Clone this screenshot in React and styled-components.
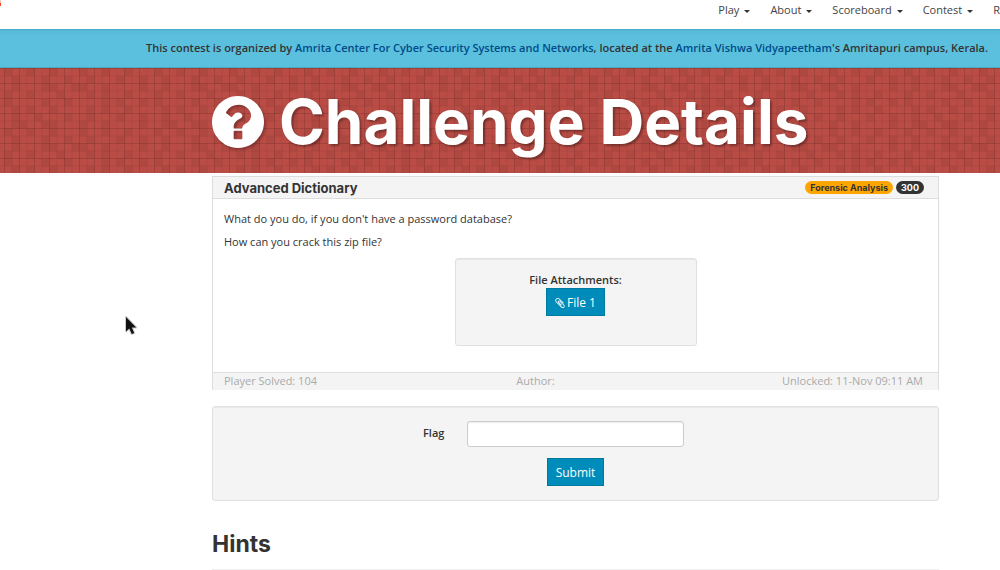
import React from "react";
import styled, { createGlobalStyle } from "styled-components";

const GlobalStyle = createGlobalStyle`
  * { box-sizing: border-box; }
  body {
    margin: 0;
    overflow-x: hidden;
    background: #fff;
    color: #333;
    font: 11px/20px "Open Sans", sans-serif;
  }
`;

const Header = styled.header`
  display: flex;
  justify-content: space-between;
  height: 29px;
  overflow: hidden;
`;

const LogoEdge = styled.svg`
  display: block;
  flex: none;
`;

const Nav = styled.nav`
  display: flex;
  gap: 20px;
`;

const NavLink = styled.a`
  display: flex;
  align-items: center;
  gap: 5px;
  height: 20px;
  color: #444;
  text-decoration: none;
  white-space: nowrap;
`;

const Caret = styled.i`
  margin-top: 3px;
  border: 3px solid transparent;
  border-top-color: #333;
  border-bottom: 0;
`;

const Banner = styled.div`
  height: 39px;
  padding: 8px 12px;
  background: linear-gradient(#57b8d6, #5bc0de 6px);
  border-top: 1px solid #46acca;
  border-bottom: 1px solid #4aa9c6;
  text-align: right;
  font-weight: 600;
  white-space: nowrap;
`;

const BannerLink = styled.a`
  color: #004b87;
  text-decoration: none;
`;

const Hero = styled.section`
  position: relative;
  height: 105px;
  overflow: hidden;
  padding: 0 61px 0 212px;
  background: #b94c45;
`;

const HeroPattern = styled.svg`
  position: absolute;
  inset: 0;
  width: 100%;
  height: 100%;
`;

const HeroTitle = styled.h1`
  position: relative;
  display: flex;
  align-items: center;
  gap: 15px;
  margin: 0;
  height: 108px;
  color: #fff;
  font: 700 62px/108px "Inter", sans-serif;
  text-shadow: 2px 2px 2px rgba(0, 0, 0, 0.3);
  white-space: nowrap;
`;

const QuestionIcon = styled.svg`
  flex: none;
  filter: drop-shadow(2px 2px 1px rgba(0, 0, 0, 0.25));
`;

const Content = styled.main`
  padding: 3px 61px 0 212px;
`;

const Challenge = styled.article`
  border: 1px solid #ddd;
  border-bottom: 0;
`;

const ChallengeHead = styled.header`
  display: flex;
  align-items: center;
  justify-content: space-between;
  height: 22px;
  padding: 0 14px 0 11px;
  background: #f4f4f4;
  border-bottom: 1px solid #ddd;
`;

const ChallengeName = styled.h2`
  margin: 0;
  font: 700 13px/20px "Inter", sans-serif;
`;

const Badges = styled.div`
  display: flex;
  gap: 3px;
`;

const Badge = styled.span`
  padding: 0 5px;
  border-radius: 7px;
  background: ${(p) => (p.$dark ? "#333" : "#ffa500")};
  color: ${(p) => (p.$dark ? "#fff" : "#333")};
  font: 700 9px/13px "Inter", sans-serif;
`;

const ChallengeBody = styled.div`
  display: flex;
  flex-direction: column;
  padding: 10px 11px 26px;
`;

const Paragraph = styled.p`
  margin: 0 0 3px;
`;

const Attachments = styled.section`
  display: flex;
  flex-direction: column;
  align-items: center;
  align-self: center;
  width: 242px;
  height: 88px;
  margin-top: 3px;
  padding-top: 13px;
  background: #f4f4f4;
  border: 1px solid #e0e0e0;
  border-radius: 3px;
  box-shadow: inset 0 1px 1px rgba(0, 0, 0, 0.05);
`;

const AttachmentsTitle = styled.strong`
  font-weight: 600;
  line-height: 16px;
`;

const Button = styled.button`
  display: inline-flex;
  align-items: center;
  justify-content: center;
  gap: 2px;
  height: 28px;
  padding: 2px 8px 0;
  border: 1px solid #0079a1;
  background: #008cba;
  color: #fff;
  font: 400 12px/20px "Open Sans", sans-serif;
`;

const ChallengeFoot = styled.footer`
  display: flex;
  justify-content: space-between;
  height: 18px;
  padding: 0 15px 0 11px;
  background: #f4f4f4;
  border-top: 1px solid #ddd;
  color: #aaa;
  line-height: 16px;
`;

const Author = styled.span`
  padding-right: 28px;
`;

const FlagForm = styled.form`
  display: flex;
  flex-direction: column;
  align-items: center;
  gap: 11px;
  margin-top: 16px;
  padding: 14px 0;
  background: #f4f4f4;
  border: 1px solid #e0e0e0;
  border-radius: 3px;
  box-shadow: inset 0 1px 1px rgba(0, 0, 0, 0.05);
`;

const Field = styled.div`
  display: flex;
  gap: 23px;
  padding-right: 44px;
`;

const FieldLabel = styled.label`
  width: 21px;
  font-weight: 600;
  line-height: 24px;
`;

const FlagInput = styled.input`
  width: 217px;
  height: 26px;
  border: 1px solid #ccc;
  border-radius: 3px;
  background: #fff;
  box-shadow: inset 0 1px 1px rgba(0, 0, 0, 0.075);
`;

const HintsTitle = styled.h2`
  margin: 23px 0 0;
  padding-bottom: 5px;
  border-bottom: 1px solid #eee;
  font: 700 23px/40px "Inter", sans-serif;
`;

const Pointer = styled.svg`
  position: absolute;
  left: 124px;
  top: 315px;
`;

const MENUS = ["Play", "About", "Scoreboard", "Contest"];

const SHADED_CELLS = [
  [0, 3, 6, 10, 13, 16],
  [1, 5, 8, 11, 15, 18],
  [1, 5, 6, 9, 10, 13, 18],
  [0, 3, 7, 11, 13, 16],
  [0, 5, 8, 13, 15, 18],
  [1, 3, 6, 11, 13, 16],
  [1, 4, 8, 11, 15, 18],
  [1, 2, 5, 6, 10, 13, 18],
];

function TiledBackground() {
  return (
    <HeroPattern aria-hidden="true">
      <defs>
        <pattern id="grid" x="4" width="15" height="15" patternUnits="userSpaceOnUse">
          <path d="M.5 0V15M0 .5H15" stroke="#000" strokeOpacity=".13" />
          <path d="M8 0V15M0 8H15" stroke="#000" strokeOpacity=".05" />
        </pattern>
        <pattern id="cells" x="4.5" y=".5" width="150" height="60" patternUnits="userSpaceOnUse">
          {SHADED_CELLS.map((row, r) =>
            row.map((c) => (
              <rect key={`${r}-${c}`} x={c * 7.5} y={r * 7.5} width="7.5" height="7.5" fill="#000" fillOpacity=".06" />
            ))
          )}
        </pattern>
      </defs>
      <rect width="100%" height="100%" fill="url(#cells)" />
      <rect width="100%" height="100%" fill="url(#grid)" />
    </HeroPattern>
  );
}

export default function App() {
  return (
    <>
      <GlobalStyle />
      <Header>
        <LogoEdge width="1" height="6" aria-hidden="true">
          <rect width="1" height="3" fill="#f9c0b5" />
          <rect y="3" width="1" height="3" fill="#f04a2a" />
        </LogoEdge>
        <Nav>
          {MENUS.map((m) => (
            <NavLink href="#" key={m}>{m}<Caret /></NavLink>
          ))}
          <NavLink href="#">R</NavLink>
        </Nav>
      </Header>
      <Banner>
        This contest is organized by <BannerLink href="#">Amrita Center For Cyber Security Systems and Networks</BannerLink>, located at the <BannerLink href="#">Amrita Vishwa Vidyapeetham</BannerLink>'s Amritapuri campus, Kerala.
      </Banner>
      <Hero>
        <TiledBackground />
        <HeroTitle>
          <QuestionIcon width="52" height="52" viewBox="0 0 1536 1536" aria-hidden="true">
            <path fill="#fff" d="M896 1248v-192q0-14-9-23t-23-9h-192q-14 0-23 9t-9 23v192q0 14 9 23t23 9h192q14 0 23-9t9-23zm256-672q0-88-55.500-163t-138.500-116-170-41q-243 0-371 213-15 24 8 42l132 100q7 6 19 6 16 0 25-12 53-68 86-92 34-24 86-24 48 0 85.500 26t37.500 59q0 38-20 61t-68 45q-63 28-115.500 86.500t-52.500 125.500v36q0 14 9 23t23 9h192q14 0 23-9t9-23q0-19 21.500-49.500t54.500-49.500q32-18 49-28.500t46-35 44.500-48 28-60.500 12.500-81zm384 192q0 209-103 385.500t-279.500 279.500-385.500 103-385.500-103-279.500-279.500-103-385.500 103-385.500 279.500-279.500 385.500-103 385.500 103 279.500 279.500 103 385.500z" />
          </QuestionIcon>
          Challenge Details
        </HeroTitle>
      </Hero>
      <Content>
        <Challenge>
          <ChallengeHead>
            <ChallengeName>Advanced Dictionary</ChallengeName>
            <Badges>
              <Badge>Forensic Analysis</Badge>
              <Badge $dark>300</Badge>
            </Badges>
          </ChallengeHead>
          <ChallengeBody>
            <Paragraph>What do you do, if you don't have a password database?</Paragraph>
            <Paragraph>How can you crack this zip file?</Paragraph>
            <Attachments>
              <AttachmentsTitle>File Attachments:</AttachmentsTitle>
              <Button type="button">
                <svg width="10" height="12" viewBox="0 0 1408 1792" aria-hidden="true">
                  <path fill="#fff" d="M1404 1385q0 117-79 196t-196 79q-135 0-235-100l-777-776q-113-115-113-271 0-159 110-270t269-111q158 0 273 113l605 606q10 10 10 22 0 16-30.500 46.500t-46.500 30.500q-13 0-23-10l-606-607q-79-77-181-77-106 0-179 75t-73 181q0 105 76 181l776 777q63 63 145 63 64 0 106-42t42-106q0-82-63-145l-581-581q-26-24-60-24-29 0-48 19t-19 48q0 32 25 59l410 410q10 10 10 22 0 16-31 47t-47 31q-12 0-22-10l-410-410q-63-61-63-149 0-82 57-139t139-57q88 0 149 63l581 581q100 98 100 235z" />
                </svg>
                File 1
              </Button>
            </Attachments>
          </ChallengeBody>
          <ChallengeFoot>
            <span>Player Solved: 104</span>
            <Author>Author:</Author>
            <span>Unlocked: 11-Nov 09:11 AM</span>
          </ChallengeFoot>
        </Challenge>
        <FlagForm>
          <Field>
            <FieldLabel htmlFor="flag">Flag</FieldLabel>
            <FlagInput id="flag" type="text" />
          </Field>
          <Button type="submit">Submit</Button>
        </FlagForm>
        <HintsTitle>Hints</HintsTitle>
      </Content>
      <Pointer width="14" height="22" viewBox="0 0 14 22" aria-hidden="true">
        <path d="M2 2V16.500L5.300 13.500L7.800 19L10.200 18L7.800 12.500H12.200Z" fill="#111" stroke="#ccc" strokeWidth="2" paintOrder="stroke" strokeLinejoin="round" />
      </Pointer>
    </>
  );
}
